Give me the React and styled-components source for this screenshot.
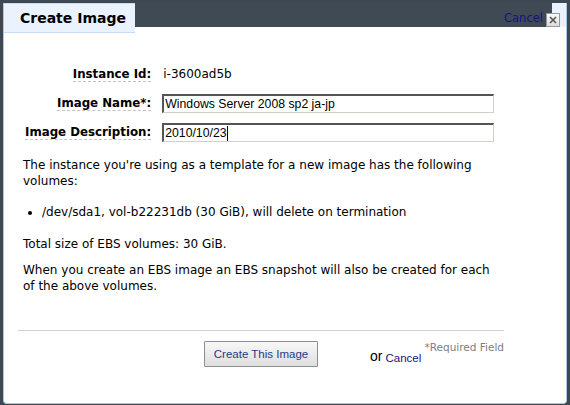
import React from "react";
import styled, { createGlobalStyle } from "styled-components";

const GlobalStyle = createGlobalStyle`
  html, body { margin: 0; padding: 0; background: #3d4852; }
  body { width: 570px; height: 405px; overflow: hidden; }
`;

const Page = styled.div`
  padding: 3px 3px 1px 3px;
  height: 405px;
  box-sizing: border-box;
  display: flex;
`;

const Dialog = styled.div`
  flex: 1;
  display: flex;
  flex-direction: column;
  background: #fff;
  border: 1px solid #a8c8e6;
  border-top: none;
  border-radius: 0 0 4px 4px;
  font-family: "DejaVu Sans", Verdana, sans-serif;
`;

const Header = styled.div`
  display: flex;
  align-items: flex-start;
  height: 31px;
`;

const Tab = styled.div`
  width: 131px;
  height: 30px;
  background: #eaf2fd;
  border-bottom: 1px solid #c6dcf4;
  border-top: 1px solid #c9dcf2;
  box-sizing: border-box;
  padding: 6px 0 0 16px;
  font-size: 14px;
  font-weight: bold;
  color: #000;
  white-space: nowrap;
`;

const HeaderBar = styled.div`
  flex: 1;
  height: 24px;
  display: flex;
  align-items: flex-end;
  justify-content: flex-end;
  padding: 0 6px 0 0;
  background: linear-gradient(to right, #3f4a54 calc(100% - 14px), #eaf2fd calc(100% - 14px));
`;

const HeaderLink = styled.a`
  font-size: 11.5px;
  color: #15157a;
  text-decoration: none;
  margin: 0 3px 2px 0;
`;

const CloseButton = styled.span`
  width: 12px;
  height: 12px;
  border: 1px solid #9a9a9a;
  background: linear-gradient(#fafafa, #dcdcdc);
  display: flex;
  align-items: center;
  justify-content: center;
`;

const Body = styled.div`
  padding: 30px 62px 0 19px;
  font-size: 12px;
  color: #000;
  flex: 1;
  display: flex;
  flex-direction: column;
`;

const FormGrid = styled.div`
  display: grid;
  grid-template-columns: max-content 332px;
  column-gap: 11px;
  row-gap: 10px;
  align-items: center;
  margin-left: 2px;
`;

const Label = styled.span`
  justify-self: end;
  font-weight: bold;
  font-size: 11.8px;
  border-bottom: 1px dashed #c4c4c4;
  line-height: 14px;
`;

const Value = styled.span`
  padding-left: 1px;
  height: 20px;
  line-height: 20px;
`;

const Field = styled.div`
  height: 19px;
  box-sizing: border-box;
  border-top: 2px solid #555;
  border-left: 2px solid #555;
  border-right: 1px solid #d4d0c8;
  border-bottom: 1px solid #d4d0c8;
  font-family: "Liberation Sans", Arial, sans-serif;
  font-size: 12.25px;
  line-height: 16px;
  padding-left: 1px;
  display: flex;
  align-items: center;
  white-space: nowrap;
`;

const Caret = styled.span`
  display: inline-block;
  width: 1px;
  height: 15px;
  background: #000;
`;

const Para = styled.p`
  margin: ${p => p.$top}px 0 0 0;
  line-height: 16px;
`;

const List = styled.ul`
  margin: 15px 0 0 0;
  padding-left: 19px;
  line-height: 16px;
`;

const Rule = styled.div`
  margin: auto 0 0 -5px;
  border-top: 1px solid #cfcfcf;
`;

const Footer = styled.div`
  display: grid;
  grid-template-columns: 1fr auto 1fr;
  margin: 10px 0 36px -5px;
  align-items: start;
`;

const Button = styled.button`
  grid-column: 2;
  width: 114px;
  height: 26px;
  border: 1px solid #8e8e8e;
  border-radius: 1px;
  background: linear-gradient(#f8f8f8, #dedede);
  color: #1d3b87;
  font-family: "Liberation Sans", Arial, sans-serif;
  font-size: 11.5px;
  padding: 0;
`;

const Aside = styled.div`
  grid-column: 3;
  display: flex;
  align-items: flex-start;
  padding-left: 52px;
`;

const Or = styled.span`
  font-family: "Liberation Sans", Arial, sans-serif;
  font-size: 14px;
  margin-top: 7px;
  margin-right: 3px;
`;

const FooterLink = styled.a`
  font-family: "Liberation Sans", Arial, sans-serif;
  font-size: 11.5px;
  color: #15157a;
  text-decoration: none;
  margin-top: 11px;
`;

const Required = styled.span`
  margin-left: auto;
  font-size: 10.5px;
  color: #808080;
`;

export default function App() {
  return (
    <>
      <GlobalStyle />
      <Page>
        <Dialog>
          <Header>
            <Tab>Create Image</Tab>
            <HeaderBar>
              <HeaderLink href="#">Cancel</HeaderLink>
              <CloseButton>
                <svg width="8" height="8" viewBox="0 0 8 8">
                  <path d="M1 1L7 7M7 1L1 7" stroke="#555" strokeWidth="1.6" />
                </svg>
              </CloseButton>
            </HeaderBar>
          </Header>
          <Body>
            <FormGrid>
              <Label>Instance Id:</Label>
              <Value>i-3600ad5b</Value>
              <Label>Image Name*:</Label>
              <Field>Windows Server 2008 sp2 ja-jp</Field>
              <Label>Image Description:</Label>
              <Field>
                2010/10/23
                <Caret />
              </Field>
            </FormGrid>
            <Para $top={15}>
              The instance you're using as a template for a new image has the following volumes:
            </Para>
            <List>
              <li>/dev/sda1, vol-b22231db (30 GiB), will delete on termination</li>
            </List>
            <Para $top={16}>Total size of EBS volumes: 30 GiB.</Para>
            <Para $top={10}>
              When you create an EBS image an EBS snapshot will also be created for each of the above volumes.
            </Para>
            <Rule />
            <Footer>
              <Button>Create This Image</Button>
              <Aside>
                <Or>or</Or>
                <FooterLink href="#">Cancel</FooterLink>
                <Required>*Required Field</Required>
              </Aside>
            </Footer>
          </Body>
        </Dialog>
      </Page>
    </>
  );
}
